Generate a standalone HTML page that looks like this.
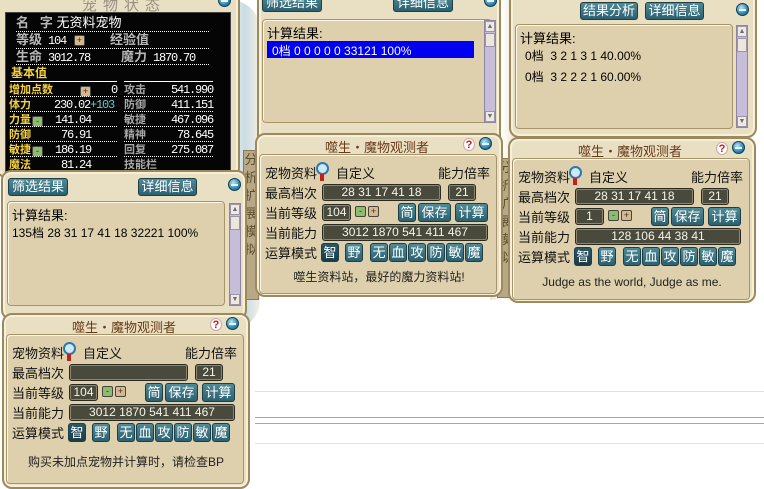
<!DOCTYPE html>
<html><head><meta charset="utf-8">
<style>
*{margin:0;padding:0;box-sizing:border-box}
body{width:764px;height:479px;overflow:hidden;background:#fff;position:relative;font-family:"Liberation Sans","Noto Sans CJK SC",sans-serif;}
.a{position:absolute}
.frame{position:absolute;background:#e9dfc3;border:2px solid #9c8a5c;border-radius:10px;box-shadow:inset 0 0 0 2px #f6efda}
.inner{position:absolute;background:#ded0ad;border:1px solid #a89468;border-radius:4px;box-shadow:inset 1px 1px 0 #fff8e6}
.btn{position:absolute;background:linear-gradient(#4f8a96,#2c6070);border:1px solid #1d3f48;border-radius:3px;color:#fff;font-size:13px;text-align:center;line-height:16px;height:18px}
.blue{position:absolute;width:13px;height:13px;border-radius:50%;background:radial-gradient(circle at 40% 35%,#bfe6f5,#2d85ad 60%,#165a7a);border:1px solid #0f3e54}
.blue:after{content:"";position:absolute;left:2px;right:2px;top:5px;height:2px;background:#e8f6fb}
.q{position:absolute;width:12px;height:13px;border-radius:50%;background:#fff;border:1px solid #c8a8a8;color:#d01010;font-size:11px;font-weight:bold;text-align:center;line-height:12px}
.sb{position:absolute;width:12px;background:#c6bed8;border:1px solid #8e86a4}
.sb .u,.sb .d{position:absolute;left:0;width:10px;height:11px;background:#efe9df;border:1px solid #9c94a8;font-size:7px;color:#6a6a7a;text-align:center;line-height:10px}
.sb .t{position:absolute;left:0;width:10px;height:14px;top:12px;background:#ece6dc;border:1px solid #9c94a8}
.res{position:absolute;font-size:13px;color:#000;white-space:pre}
.lbl{position:absolute;font-size:13px;color:#111;white-space:nowrap}
.fld{position:absolute;height:17px;background:#4a4a3c;border:1px solid #2a2a20;border-radius:3px;box-shadow:inset 0 0 0 1px #8a8670;color:#f4f4ea;font-size:12px;text-align:center;line-height:15px;white-space:nowrap}
.mb{position:absolute;width:18px;height:19px;background:linear-gradient(#4f8a96,#2c6070);border:1px solid #1d3f48;border-radius:3px;color:#fff;font-size:13px;text-align:center;line-height:17px}
.mb.s{background:linear-gradient(#2c5766,#1a3c48)}
.sm{position:absolute;width:11px;height:11px;border:1px solid #444;border-radius:2px;font-size:9px;line-height:9px;text-align:center;color:#333}
.tab{position:absolute;width:16px;background:#b8a888;border:1px solid #8a7a56;color:#5b4d2f;font-size:13px;line-height:18px;text-align:center}
.st{position:absolute;font-size:12px;letter-spacing:-1.2px;line-height:14px;color:#fff;white-space:pre;font-family:"Liberation Mono","Noto Sans CJK SC",monospace}
.c{font-family:"Liberation Sans","Noto Sans CJK SC",sans-serif;font-size:13px;letter-spacing:0}
.y{color:#f4d23c;font-weight:bold;font-family:"Liberation Sans","Noto Sans CJK SC",sans-serif;font-size:11px;letter-spacing:0}
.g{color:#b8b8b8;font-weight:bold;font-family:"Liberation Sans","Noto Sans CJK SC",sans-serif;font-size:13px;letter-spacing:0}
.gr{color:#a8a8a8;font-weight:bold;font-family:"Liberation Sans","Noto Sans CJK SC",sans-serif;font-size:11px;letter-spacing:0}
.dl{position:absolute;height:0;border-top:1px dotted #fff}
</style></head><body>

<div class="a" style="left:255px;top:391px;width:509px;border-top:1px solid #d6e6ea"></div>
<div class="a" style="left:255px;top:417px;width:509px;border-top:1px solid #8ab0be"></div>
<div class="a" style="left:255px;top:423px;width:509px;border-top:1px solid #8ab0be"></div>
<div class="a" style="left:255px;top:443px;width:509px;border-top:1px solid #d6e6ea"></div>

<div class="a" style="left:230px;top:0px;width:30px;height:330px;background:linear-gradient(90deg,#eef2ee,#c8dce4,#f4f0e4);border-radius:0 30px 30px 0"></div>
<div class="a" style="left:490px;top:0;width:24px;height:300px;background:linear-gradient(90deg,#efe6cf,#fff,#efe6cf)"></div>

<div class="tab" style="left:243px;top:150px;height:150px">分<br>析<br>扩<br>展<br>模<br>拟</div>
<div class="tab" style="left:497px;top:158px;height:140px">分<br>析<br>扩<br>展<br>模<br>拟</div>

<!-- Panel A -->
<div class="frame" style="left:-4px;top:-12px;width:244px;height:190px"></div>
<div class="a" style="left:82px;top:-6px;font-size:15px;color:#9a9080;letter-spacing:6px">宠物状态</div>
<div class="blue" style="left:218px;top:-6px"></div>
<div class="a" style="left:5px;top:12px;width:226px;height:160px;background:#050505;border:1px solid #444"></div>
<div class="st" style="left:16px;top:16px"><span class="g">名&nbsp;&nbsp;&nbsp;字</span><span class="c"> 无资料宠物</span></div>
<div class="dl" style="left:16px;top:31px;width:193px"></div>
<div class="st" style="left:16px;top:33px"><span class="g">等级</span> 104</div>
<div class="sm" style="left:74px;top:35px;background:#d8b88a">+</div>
<div class="st" style="left:110px;top:33px"><span class="g">经验值</span></div>
<div class="dl" style="left:16px;top:48px;width:193px"></div>
<div class="st" style="left:16px;top:50px"><span class="g">生命</span> 3012.78</div>
<div class="st" style="left:121px;top:50px"><span class="g">魔力</span> 1870.70</div>
<div class="dl" style="left:16px;top:64px;width:193px"></div>
<div class="st" style="left:11px;top:66px"><span class="y" style="font-size:12px">基本值</span></div>
<div class="a" style="left:10px;top:81px;width:107px;border-top:1px solid #fff"></div>
<div class="a" style="left:124px;top:81px;width:89px;border-top:1px solid #fff"></div>
<div class="st" style="left:9px;top:83px"><span class="y">增加点数</span></div>
<div class="st" style="left:9px;top:98px"><span class="y">体力</span></div>
<div class="st" style="left:9px;top:113px"><span class="y">力量</span></div>
<div class="st" style="left:9px;top:128px"><span class="y">防御</span></div>
<div class="st" style="left:9px;top:143px"><span class="y">敏捷</span></div>
<div class="st" style="left:9px;top:158px"><span class="y">魔法</span></div>
<div class="sm" style="left:80px;top:86px;background:#d8b88a">+</div>
<div class="sm" style="left:32px;top:116px;background:#8cbc6c">-</div>
<div class="sm" style="left:32px;top:146px;background:#8cbc6c">-</div>
<div class="st" style="left:60px;top:83px;width:57px;text-align:right">0</div>
<div class="st" style="left:54px;top:98px">230.02<span style="color:#5ad0d0">+103</span></div>
<div class="st" style="left:55px;top:113px">141.04</div>
<div class="st" style="left:61px;top:128px">76.91</div>
<div class="st" style="left:55px;top:143px">186.19</div>
<div class="st" style="left:61px;top:158px">81.24</div>
<div class="st" style="left:124px;top:83px"><span class="gr">攻击</span></div>
<div class="st" style="left:124px;top:98px"><span class="gr">防御</span></div>
<div class="st" style="left:124px;top:113px"><span class="gr">敏捷</span></div>
<div class="st" style="left:124px;top:128px"><span class="gr">精神</span></div>
<div class="st" style="left:124px;top:143px"><span class="gr">回复</span></div>
<div class="st" style="left:124px;top:158px"><span class="gr">技能栏</span></div>
<div class="st" style="left:150px;top:83px;width:63px;text-align:right">541.990</div>
<div class="st" style="left:150px;top:98px;width:63px;text-align:right">411.151</div>
<div class="st" style="left:150px;top:113px;width:63px;text-align:right">467.096</div>
<div class="st" style="left:150px;top:128px;width:63px;text-align:right">78.645</div>
<div class="st" style="left:150px;top:143px;width:63px;text-align:right">275.087</div>
<div class="dl" style="left:10px;top:96px;width:107px"></div><div class="dl" style="left:124px;top:96px;width:89px"></div>
<div class="dl" style="left:10px;top:111px;width:107px"></div><div class="dl" style="left:124px;top:111px;width:89px"></div>
<div class="dl" style="left:10px;top:126px;width:107px"></div><div class="dl" style="left:124px;top:126px;width:89px"></div>
<div class="dl" style="left:10px;top:141px;width:107px"></div><div class="dl" style="left:124px;top:141px;width:89px"></div>
<div class="dl" style="left:10px;top:156px;width:107px"></div><div class="dl" style="left:124px;top:156px;width:89px"></div>

<!-- Panel B -->
<div class="frame" style="left:1px;top:170px;width:246px;height:150px"></div>
<div class="btn" style="left:8px;top:178px;width:60px">筛选结果</div>
<div class="btn" style="left:138px;top:178px;width:59px">详细信息</div>
<div class="blue" style="left:228px;top:178px"></div>
<div class="inner" style="left:7px;top:201px;width:218px;height:105px"></div>
<div class="res" style="left:12px;top:205px">计算结果:</div>
<div class="res" style="left:12px;top:224px;font-size:12px">135档 28 31 17 41 18 32221 100%</div>
<div class="sb" style="left:229px;top:203px;height:103px"><div class="u" style="top:0">▲</div><div class="t"></div><div class="d" style="bottom:0">▼</div></div>

<!-- Panel D -->
<div class="frame" style="left:257px;top:-12px;width:244px;height:158px"></div>
<div class="btn" style="left:262px;top:-6px;width:60px">筛选结果</div>
<div class="btn" style="left:393px;top:-6px;width:60px">详细信息</div>
<div class="blue" style="left:484px;top:-6px"></div>
<div class="inner" style="left:262px;top:19px;width:230px;height:104px"></div>
<div class="res" style="left:267px;top:23px">计算结果:</div>
<div class="a" style="left:267px;top:41px;width:207px;height:17px;background:#0000f0"></div>
<div class="res" style="left:272px;top:42px;color:#fff;font-size:12px">0档 0 0 0 0 0 33121 100%</div>
<div class="sb" style="left:484px;top:20px;height:103px"><div class="u" style="top:0">▲</div><div class="t"></div><div class="d" style="bottom:0">▼</div></div>

<!-- Panel F -->
<div class="frame" style="left:509px;top:-12px;width:248px;height:150px"></div>
<div class="btn" style="left:580px;top:2px;width:58px">结果分析</div>
<div class="btn" style="left:645px;top:2px;width:59px">详细信息</div>
<div class="blue" style="left:736px;top:3px"></div>
<div class="inner" style="left:515px;top:24px;width:218px;height:105px"></div>
<div class="res" style="left:520px;top:28px">计算结果:</div>
<div class="res" style="left:525px;top:47px;font-size:12px">0档  3 2 1 3 1 40.00%</div>
<div class="res" style="left:525px;top:68px;font-size:12px">0档  3 2 2 2 1 60.00%</div>
<div class="sb" style="left:736px;top:25px;height:103px"><div class="u" style="top:0">▲</div><div class="t"></div><div class="d" style="bottom:0">▼</div></div>

<div id="obs"></div>
<script>
function obs(L,T,o){
 var h='';
 h+='<div class="frame" style="left:'+L+'px;top:'+T+'px;width:248px;height:'+o.fh+'px"></div>';
 h+='<div class="a" style="left:'+(L+70)+'px;top:'+(T+4)+'px;font-size:13px;color:#6a3a18">噬生・魔物观测者</div>';
 h+='<div class="q" style="left:'+(L+208)+'px;top:'+(T+5)+'px">?</div>';
 h+='<div class="blue" style="left:'+(L+224)+'px;top:'+(T+4)+'px"></div>';
 h+='<div class="inner" style="left:'+(L+4)+'px;top:'+(T+21)+'px;width:238px;height:'+(o.ih)+'px"></div>';
 var X=L+10;
 var rows=[39,59,79,99,119];
 function lb(t,y){h+='<div class="lbl" style="left:'+X+'px;top:'+(T+y-9)+'px">'+t+'</div>';}
 lb('宠物资料',rows[0]);lb('最高档次',rows[1]);lb('当前等级',rows[2]);lb('当前能力',rows[3]);lb('运算模式',rows[4]);
 h+='<div class="a" style="left:'+(L+61)+'px;top:'+(T+rows[0]-10)+'px;width:13px;height:13px;border-radius:50%;border:2px solid #2a7ab0;background:#cfe8f6"></div>';
 h+='<div class="a" style="left:'+(L+65)+'px;top:'+(T+rows[0]+2)+'px;width:4px;height:7px;background:#c02020"></div>';
 h+='<div class="lbl" style="left:'+(L+81)+'px;top:'+(T+rows[0]-9)+'px">自定义</div>';
 h+='<div class="lbl" style="left:'+(L+183)+'px;top:'+(T+rows[0]-9)+'px">能力倍率</div>';
 h+='<div class="fld" style="left:'+(L+67)+'px;top:'+(T+rows[1]-8)+'px;width:119px">'+o.max+'</div>';
 h+='<div class="fld" style="left:'+(L+193)+'px;top:'+(T+rows[1]-8)+'px;width:28px">21</div>';
 h+='<div class="fld" style="left:'+(L+67)+'px;top:'+(T+rows[2]-8)+'px;width:29px">'+o.lv+'</div>';
 h+='<div class="sm" style="left:'+(L+100)+'px;top:'+(T+rows[2]-6)+'px;background:#8cbc6c">-</div>';
 h+='<div class="sm" style="left:'+(L+113)+'px;top:'+(T+rows[2]-6)+'px;background:#d8b88a">+</div>';
 h+='<div class="mb" style="left:'+(L+143)+'px;top:'+(T+rows[2]-9)+'px">简</div>';
 h+='<div class="mb" style="left:'+(L+163)+'px;top:'+(T+rows[2]-9)+'px;width:33px">保存</div>';
 h+='<div class="mb" style="left:'+(L+200)+'px;top:'+(T+rows[2]-9)+'px;width:33px">计算</div>';
 h+='<div class="fld" style="left:'+(L+67)+'px;top:'+(T+rows[3]-8)+'px;width:166px">'+o.ab+'</div>';
 var m=['智','野','无','血','攻','防','敏','魔'],xs=[66,90,115,134,153,172,191,210];
 for(var i=0;i<8;i++)h+='<div class="mb'+(i==0?' s':'')+'" style="left:'+(L+xs[i])+'px;top:'+(T+rows[4]-9)+'px">'+m[i]+'</div>';
 h+='<div class="a" style="left:'+L+'px;width:248px;text-align:center;top:'+(T+o.fy-8)+'px;font-size:'+o.fs+'px;color:#222">'+o.f+'</div>';
 return h;
}
document.getElementById('obs').outerHTML=
 obs(255,133,{fh:164,ih:140,max:'28 31 17 41 18',lv:'104',ab:'3012 1870 541 411 467',f:'噬生资料站，最好的魔力资料站!',fy:143,fs:12})+
 obs(508,137,{fh:166,ih:142,max:'28 31 17 41 18',lv:'1',ab:'128 106 44 38 41',f:'Judge as the world, Judge as me.',fy:146,fs:12})+
 obs(2,313,{fh:176,ih:150,max:'',lv:'104',ab:'3012 1870 541 411 467',f:'购买未加点宠物并计算时，请检查BP',fy:148,fs:12});
</script>
</body></html>
